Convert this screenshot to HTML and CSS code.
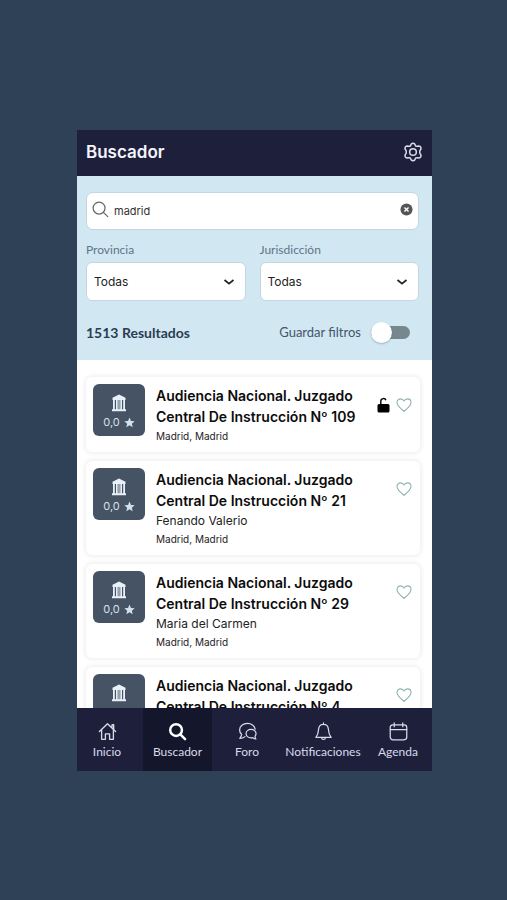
FILE: index.html
```html
<!DOCTYPE html>
<html lang="es">
<head>
<meta charset="utf-8">
<meta name="viewport" content="width=device-width, initial-scale=1">
<title>Buscador</title>
<link rel="stylesheet" href="styles.css">
</head>
<body>
<svg class="defs" aria-hidden="true">
  <symbol id="court" viewBox="0 0 16 18"><path fill="currentColor" d="M8 .5l6.500 3.200V6h-13V3.700zM2 6h1.800v9.500H2zM5 6h1.700v9.500H5zM9.300 6H11v9.500H9.300zM12.200 6H14v9.500h-1.800zM7.500 6h1v9.500h-1zM1 15.200h14v2H1z"/></symbol>
  <symbol id="star" viewBox="0 0 24 24"><path fill="currentColor" d="M12 1l3.200 7.500 8.100.7-6.200 5.300 1.900 8L12 18.200 5 22.500l1.900-8L.7 9.200l8.100-.7z"/></symbol>
  <symbol id="heart" viewBox="0 0 24 24"><path fill="none" stroke="currentColor" stroke-width="1.600" stroke-linejoin="round" d="M12 21.500C8.500 18.500 1.500 13.500 1.500 8.300 1.500 5 4 2.800 6.800 2.800c2.200 0 4.200 1.200 5.200 3.400 1-2.200 3-3.400 5.200-3.400 2.800 0 5.300 2.200 5.300 5.500 0 5.200-7 10.200-10.500 13.200z"/></symbol>
</svg>
<div class="app">
  <header class="topbar">
    <h1>Buscador</h1>
    <button class="icon-button" type="button" aria-label="Ajustes">
      <svg class="gear" viewBox="0 0 24 24" fill="none" stroke="currentColor" stroke-width="1.800" stroke-linejoin="round"><circle cx="12" cy="12" r="4"/><path d="M9.700 2.800Q12 .2 14.300 2.800L15 4.600Q16 5.400 17.200 5.200L19 4.900Q22.300 5.400 21.400 8.700L20.300 10.400Q19.800 12 20.300 13.600L21.400 15.300Q22.300 18.600 19 19.100L17.200 18.800Q16 18.600 15 19.400L14.300 21.200Q12 23.800 9.700 21.200L9 19.400Q8 18.600 6.800 18.800L5 19.100Q1.700 18.600 2.600 15.300L3.700 13.600Q4.200 12 3.700 10.400L2.600 8.700Q1.700 5.400 5 4.900L6.800 5.200Q8 5.400 9 4.600z"/></svg>
    </button>
  </header>

  <form class="filters">
    <div class="search">
      <svg class="search-icon" viewBox="0 0 18 18" fill="none" stroke="currentColor" stroke-width="1.300" stroke-linecap="round"><circle cx="7.500" cy="7.500" r="6.300"/><path d="M12 12l4.700 4.500"/></svg>
      <input type="text" value="madrid" aria-label="Buscar">
      <button class="icon-button clear" type="button" aria-label="Borrar">
        <svg viewBox="0 0 14 14"><circle cx="7" cy="7" r="6.500" fill="#555"/><path d="M4.800 4.800l4.400 4.400M9.200 4.800L4.800 9.200" stroke="#fff" stroke-width="1.500"/></svg>
      </button>
    </div>
    <div class="selects">
      <div class="field">
        <label for="provincia">Provincia</label>
        <div class="select">
          <select id="provincia"><option>Todas</option></select>
          <svg viewBox="0 0 12 8"><path d="M1.500 2L6 5.600 10.500 2" fill="none" stroke="currentColor" stroke-width="1.700"/></svg>
        </div>
      </div>
      <div class="field">
        <label for="jurisdiccion">Jurisdicción</label>
        <div class="select">
          <select id="jurisdiccion"><option>Todas</option></select>
          <svg viewBox="0 0 12 8"><path d="M1.500 2L6 5.600 10.500 2" fill="none" stroke="currentColor" stroke-width="1.700"/></svg>
        </div>
      </div>
    </div>
    <div class="summary">
      <strong>1513 Resultados</strong>
      <label class="save">Guardar filtros <input class="toggle" type="checkbox" role="switch"></label>
    </div>
  </form>

  <main class="results">
    <article class="card">
      <div class="badge"><svg class="court"><use href="#court"/></svg><span>0,0 <svg class="star"><use href="#star"/></svg></span></div>
      <div class="info"><h2>Audiencia Nacional. Juzgado Central De Instrucción Nº 109</h2><p class="place">Madrid, Madrid</p></div>
      <div class="actions">
        <svg class="lock" viewBox="0 0 13 16"><rect x=".5" y="7" width="12" height="8.500" rx="1.500" fill="#000"/><path d="M3.800 7.500V4.200a2.700 2.700 0 0 1 5.200-1" fill="none" stroke="#000" stroke-width="1.400"/></svg>
        <button class="icon-button" type="button" aria-label="Favorito"><svg class="heart"><use href="#heart"/></svg></button>
      </div>
    </article>
    <article class="card">
      <div class="badge"><svg class="court"><use href="#court"/></svg><span>0,0 <svg class="star"><use href="#star"/></svg></span></div>
      <div class="info"><h2>Audiencia Nacional. Juzgado Central De Instrucción Nº 21</h2><p class="person">Fenando Valerio</p><p class="place">Madrid, Madrid</p></div>
      <div class="actions"><button class="icon-button" type="button" aria-label="Favorito"><svg class="heart"><use href="#heart"/></svg></button></div>
    </article>
    <article class="card">
      <div class="badge"><svg class="court"><use href="#court"/></svg><span>0,0 <svg class="star"><use href="#star"/></svg></span></div>
      <div class="info"><h2>Audiencia Nacional. Juzgado Central De Instrucción Nº 29</h2><p class="person">Maria del Carmen</p><p class="place">Madrid, Madrid</p></div>
      <div class="actions"><button class="icon-button" type="button" aria-label="Favorito"><svg class="heart"><use href="#heart"/></svg></button></div>
    </article>
    <article class="card">
      <div class="badge"><svg class="court"><use href="#court"/></svg></div>
      <div class="info"><h2>Audiencia Nacional. Juzgado Central De Instrucción Nº 4</h2></div>
      <div class="actions"><button class="icon-button" type="button" aria-label="Favorito"><svg class="heart"><use href="#heart"/></svg></button></div>
    </article>
  </main>

  <nav class="tabs">
    <a href="#inicio"><svg viewBox="0 0 20 20" fill="none" stroke="currentColor" stroke-width="1.400" stroke-linejoin="round" stroke-linecap="round"><path d="M1.500 10L10 1.800 18.500 10M14.800 6.200V2.800h1.700v5M3.800 8v10.200h4V12.500h4.400v5.700h4V8"/></svg>Inicio</a>
    <a href="#buscador" class="active" aria-current="page"><svg viewBox="0 0 20 20" fill="none" stroke="currentColor" stroke-width="2.600" stroke-linecap="round"><circle cx="8.500" cy="8.500" r="6.200"/><path d="M13.200 13.200l4.800 4.800"/></svg>Buscador</a>
    <a href="#foro"><svg viewBox="0 0 20 20" fill="none" stroke="currentColor" stroke-width="1.300" stroke-linejoin="round" stroke-linecap="round"><path d="M18 7.500C17.500 4 14 1.500 10 1.500c-4.700 0-8.300 3-8.300 6.800 0 2 .8 3.600 2.200 4.800-.2 1.600-.9 2.900-2 4.200 2.300 0 4-.6 5.500-1.900"/><path d="M13.700 7.800c-3 0-5.200 1.900-5.200 4.400s2.200 4.500 5.200 4.500c.7 0 1.300-.1 1.900-.3.900.9 1.900 1.400 3.200 1.500-.6-.9-.9-1.700-.9-2.800.7-.8 1.100-1.800 1.100-2.900 0-2.500-2.300-4.400-5.300-4.400z"/></svg>Foro</a>
    <a href="#notificaciones"><svg viewBox="0 0 20 20" fill="none" stroke="currentColor" stroke-width="1.300" stroke-linejoin="round" stroke-linecap="round"><path d="M10 2.500c-3.200 0-5 2.300-5.200 5.300C4.600 11.500 4 13.700 2 16.200h16c-2-2.500-2.600-4.700-2.800-8.400C15 4.800 13.200 2.500 10 2.500zM10 1v1.500M8 16.400c.2 2.700 3.800 2.700 4 0"/></svg>Notificaciones</a>
    <a href="#agenda"><svg viewBox="0 0 20 20" fill="none" stroke="currentColor" stroke-width="1.300" stroke-linecap="round"><rect x="1.300" y="3" width="17.400" height="15.700" rx="2.800"/><path d="M1.300 8h17.400M5.500 1v4M14.500 1v4"/></svg>Agenda</a>
  </nav>
</div>
</body>
</html>
```
FILE: styles.css
```css
* { box-sizing: border-box; }

body {
  margin: 0;
  height: 100vh;
  padding: 130px 75px 129px 77px;
  background: #2f4156;
  font-family: Inter, "Liberation Sans", sans-serif;
  color: #111;
}

h1, h2, p { margin: 0; }
svg { display: block; }
.defs { display: none; }

.app {
  height: 100%;
  display: flex;
  flex-direction: column;
  background: #fff;
}

.icon-button {
  padding: 0;
  border: 0;
  background: none;
  color: inherit;
}

.topbar {
  display: flex;
  align-items: center;
  justify-content: space-between;
  height: 46px;
  padding: 0 9px 2px;
  background: #1e203b;
  color: #f4f5fb;
}
.topbar h1 { font-size: 17px; line-height: 24px; font-weight: 600; }
.gear { width: 20px; height: 20px; color: #dcdcea; }

.filters {
  height: 184px;
  padding: 16px 13px 0 9px;
  background: #d1e7f2;
  font-family: Lato, sans-serif;
}

.search {
  display: flex;
  align-items: center;
  gap: 5px;
  height: 38px;
  padding: 0 5px 4px;
  border: 1px solid #c6d5df;
  border-radius: 7px;
  background: #fff;
}
.search-icon { width: 17px; height: 17px; flex: none; color: #666; }
.search input {
  flex: 1;
  min-width: 0;
  height: 32px;
  padding: 4px 0 0;
  border: 0;
  outline: 0;
  background: none;
  font: 11px Inter, sans-serif;
  color: #333;
}
.clear svg { width: 13px; height: 13px; }

.selects { display: flex; gap: 14px; margin-top: 12px; }
.field { flex: 1; }
.field label { display: block; font-size: 12px; line-height: 16px; color: #60758a; }
.select {
  display: grid;
  align-items: center;
  margin-top: 4px;
}
.select > * { grid-area: 1 / 1; }
.select select {
  width: 100%;
  height: 39px;
  padding: 0 7px;
  border: 1px solid #c6d5df;
  border-radius: 6px;
  appearance: none;
  background: #fff;
  font: 12px Inter, sans-serif;
  color: #222;
}
.select svg {
  justify-self: end;
  width: 12px;
  height: 8px;
  margin-right: 11px;
  color: #222;
  pointer-events: none;
}

.summary {
  display: flex;
  align-items: center;
  justify-content: space-between;
  height: 24px;
  margin-top: 19px;
  padding-right: 9px;
  color: #2b3d52;
}
.summary strong { font-size: 14px; }
.save { display: flex; align-items: center; gap: 10px; font-size: 13px; color: #43566b; }
.toggle {
  appearance: none;
  display: flex;
  align-items: center;
  width: 39px;
  height: 13px;
  margin: 0;
  border-radius: 7px;
  background: #77878f;
}
.toggle::before {
  content: "";
  width: 21px;
  height: 21px;
  flex: none;
  border-radius: 50%;
  background: #fff;
  box-shadow: 0 1px 2px rgba(40, 60, 80, .3);
}
.toggle:checked { justify-content: flex-end; }

.results {
  flex: 1;
  min-height: 0;
  overflow: hidden;
  display: flex;
  flex-direction: column;
  gap: 9px;
  padding: 17px 12px 0 9px;
}
.card {
  flex: none;
  display: flex;
  gap: 11px;
  padding: 7px 8px 7px 7px;
  border-radius: 6px;
  background: #fff;
  box-shadow: 0 0 5px 1px rgba(0, 0, 0, .08);
}
.badge {
  flex: none;
  display: flex;
  flex-direction: column;
  align-items: center;
  gap: 2px;
  width: 52px;
  height: 52px;
  padding-top: 10px;
  border-radius: 6px;
  background: #465365;
  color: #e8f0f8;
  font-size: 11px;
  line-height: 16px;
}
.badge span { display: flex; align-items: center; gap: 4px; color: #d5e0ea; }
.court { width: 16px; height: 18px; }
.star { width: 11px; height: 11px; }
.info { flex: 1; min-width: 0; padding-top: 1px; }
.info h2 { max-width: 206px; font-size: 14px; line-height: 21px; font-weight: 600; color: #0c0c0c; }
.person { font-size: 12px; line-height: 19px; color: #222; }
.place { font-size: 10px; line-height: 18px; color: #222; }
.actions { display: flex; align-items: flex-start; gap: 6px; padding-top: 13px; margin-left: -40px; color: #8eb0b0; }
.lock { width: 13px; height: 16px; }
.heart { width: 16px; height: 16px; }

.tabs {
  display: grid;
  grid-template-columns: 66fr 69fr 70fr 82fr 68fr;
  height: 63px;
  background: #1e203b;
}
.tabs a {
  display: flex;
  flex-direction: column;
  align-items: center;
  gap: 3px;
  padding-top: 14px;
  font: 12px/16px Lato, sans-serif;
  color: #d8dbea;
  text-decoration: none;
}
.tabs a:first-child { padding-right: 6px; }
.tabs svg { width: 19px; height: 19px; }
.tabs .active { background: #14162b; }
.tabs .active svg { color: #fff; }
```
